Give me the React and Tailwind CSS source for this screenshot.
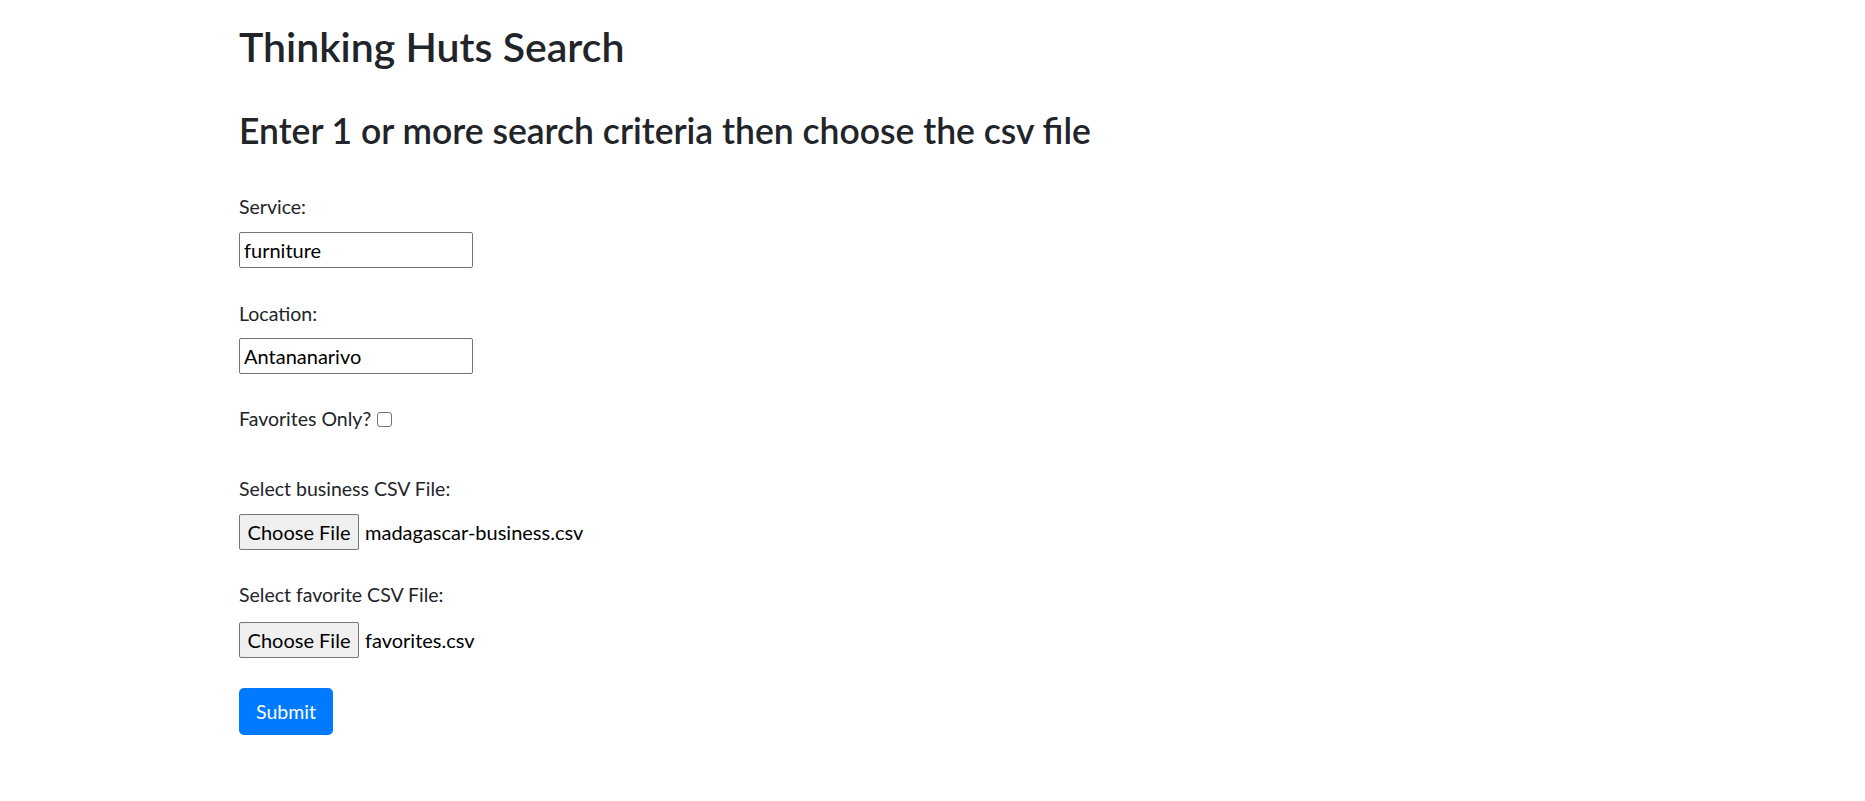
function FileField({ label, fileName, labelGap, className }) {
  return (
    <div className={className}>
      <label className="block h-[30px] leading-[30px]">{label}</label>
      <div className={`flex items-center ${labelGap}`}>
        <button
          type="button"
          className="w-[120px] h-[36px] bg-[#efefef] border border-[#767676] rounded-[2px] text-[20px] text-black leading-none"
        >
          Choose File
        </button>
        <span className="ml-[6px] text-[20px] text-black">{fileName}</span>
      </div>
    </div>
  )
}

export default function App() {
  return (
    <div
      className="min-h-screen bg-white pl-[239px] text-[19.5px] text-[#212529]"
      style={{ fontFamily: 'Lato, "Open Sans", sans-serif' }}
    >
      <h1 className="pt-[22px] text-[41px] leading-[49px] font-semibold">Thinking Huts Search</h1>
      <h2 className="mt-[38px] text-[35.5px] leading-[43px] font-semibold">
        Enter 1 or more search criteria then choose the csv file
      </h2>

      <form className="flex flex-col items-start" onSubmit={(e) => e.preventDefault()}>
        <label className="mt-[40px] h-[30px] leading-[30px]">Service:</label>
        <input
          type="text"
          defaultValue="furniture"
          className="mt-[10px] w-[234px] h-[36px] px-[4px] border border-[#767676] rounded-[2px] text-[20px] text-black outline-none"
        />

        <label className="mt-[31px] h-[30px] leading-[30px]">Location:</label>
        <input
          type="text"
          defaultValue="Antananarivo"
          className="mt-[9px] w-[234px] h-[36px] px-[4px] border border-[#767676] rounded-[2px] text-[20px] text-black outline-none"
        />

        <label className="mt-[30px] h-[30px] leading-[30px] flex items-center">
          Favorites Only?
          <input
            type="checkbox"
            className="ml-[6px] appearance-none w-[15px] h-[15px] border border-[#767676] rounded-[3px] bg-white"
          />
        </label>

        <FileField
          className="mt-[40px]"
          labelGap="mt-[10px]"
          label="Select business CSV File:"
          fileName="madagascar-business.csv"
        />
        <FileField
          className="mt-[30px]"
          labelGap="mt-[12px]"
          label="Select favorite CSV File:"
          fileName="favorites.csv"
        />

        <button
          type="submit"
          className="mt-[30px] w-[94px] h-[47px] bg-[#007bff] text-white rounded-[5px] text-[19.5px]"
        >
          Submit
        </button>
      </form>
    </div>
  )
}
